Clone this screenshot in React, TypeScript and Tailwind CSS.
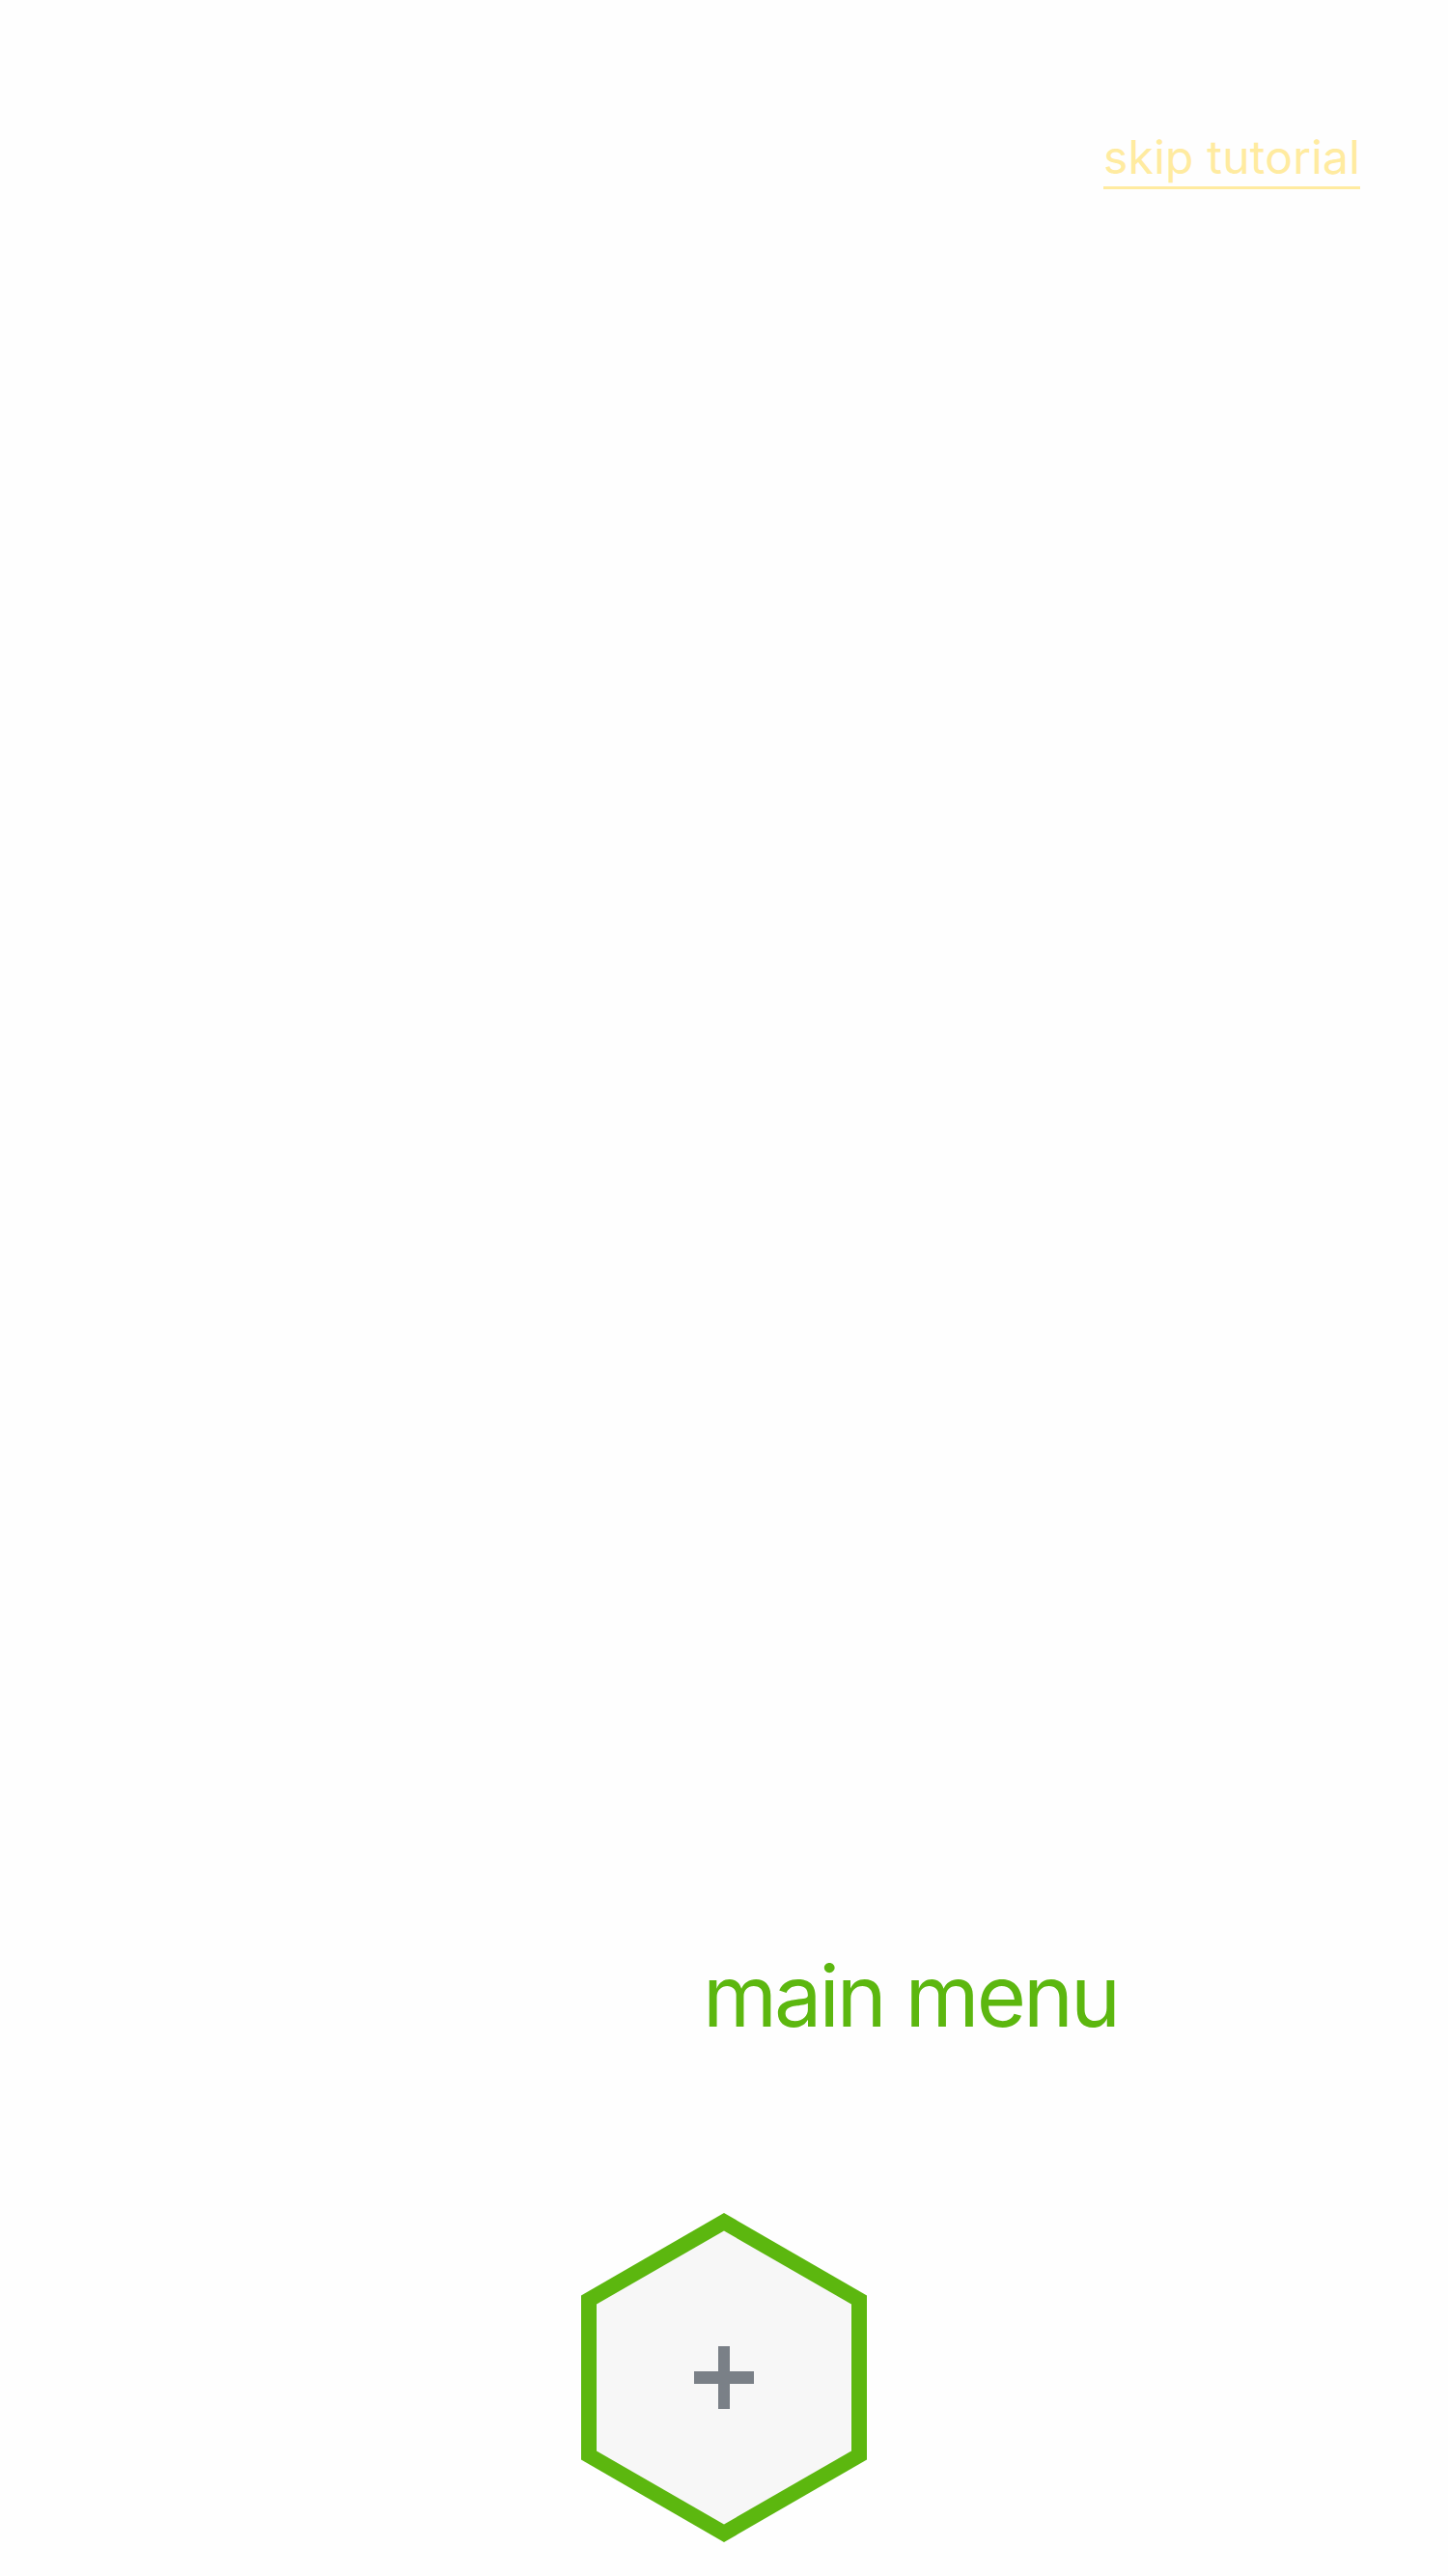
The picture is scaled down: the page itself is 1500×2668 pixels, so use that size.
import React from 'react';

const Hexagon: React.FC = () => (
  <svg width="296" height="341" viewBox="0 0 296 341" className="block">
    <polygon points="148,0 296,85.5 296,255.5 148,341 0,255.5 0,85.5" fill="#5cb70f" />
    <polygon points="148,18.5 280,94.5 280,246.5 148,322.5 16,246.5 16,94.5" fill="#f7f7f7" />
    <rect x="142" y="138" width="12" height="65" fill="#7a8087" />
    <rect x="117" y="164" width="62" height="13" fill="#7a8087" />
  </svg>
);

export default function App() {
  return (
    <div
      className="flex flex-col h-[2668px] w-full bg-[#fefefe]"
      style={{ fontFamily: 'Inter, "Noto Sans", sans-serif' }}
    >
      <div className="flex justify-end pt-[139px] pr-[91px]">
        <span className="text-[48px] leading-none tracking-[0.2px] text-[#ffeba0] pb-[6px] border-b-[3px] border-[#ffeba0]">
          skip tutorial
        </span>
      </div>

      <div className="flex-1" />

      <div className="pl-[728px]">
        <span className="text-[88px] leading-none tracking-[-3px] text-[#5cb70f]">main menu</span>
      </div>

      <div className="flex justify-center pt-[181px] pb-[35px]">
        <Hexagon />
      </div>
    </div>
  );
}
